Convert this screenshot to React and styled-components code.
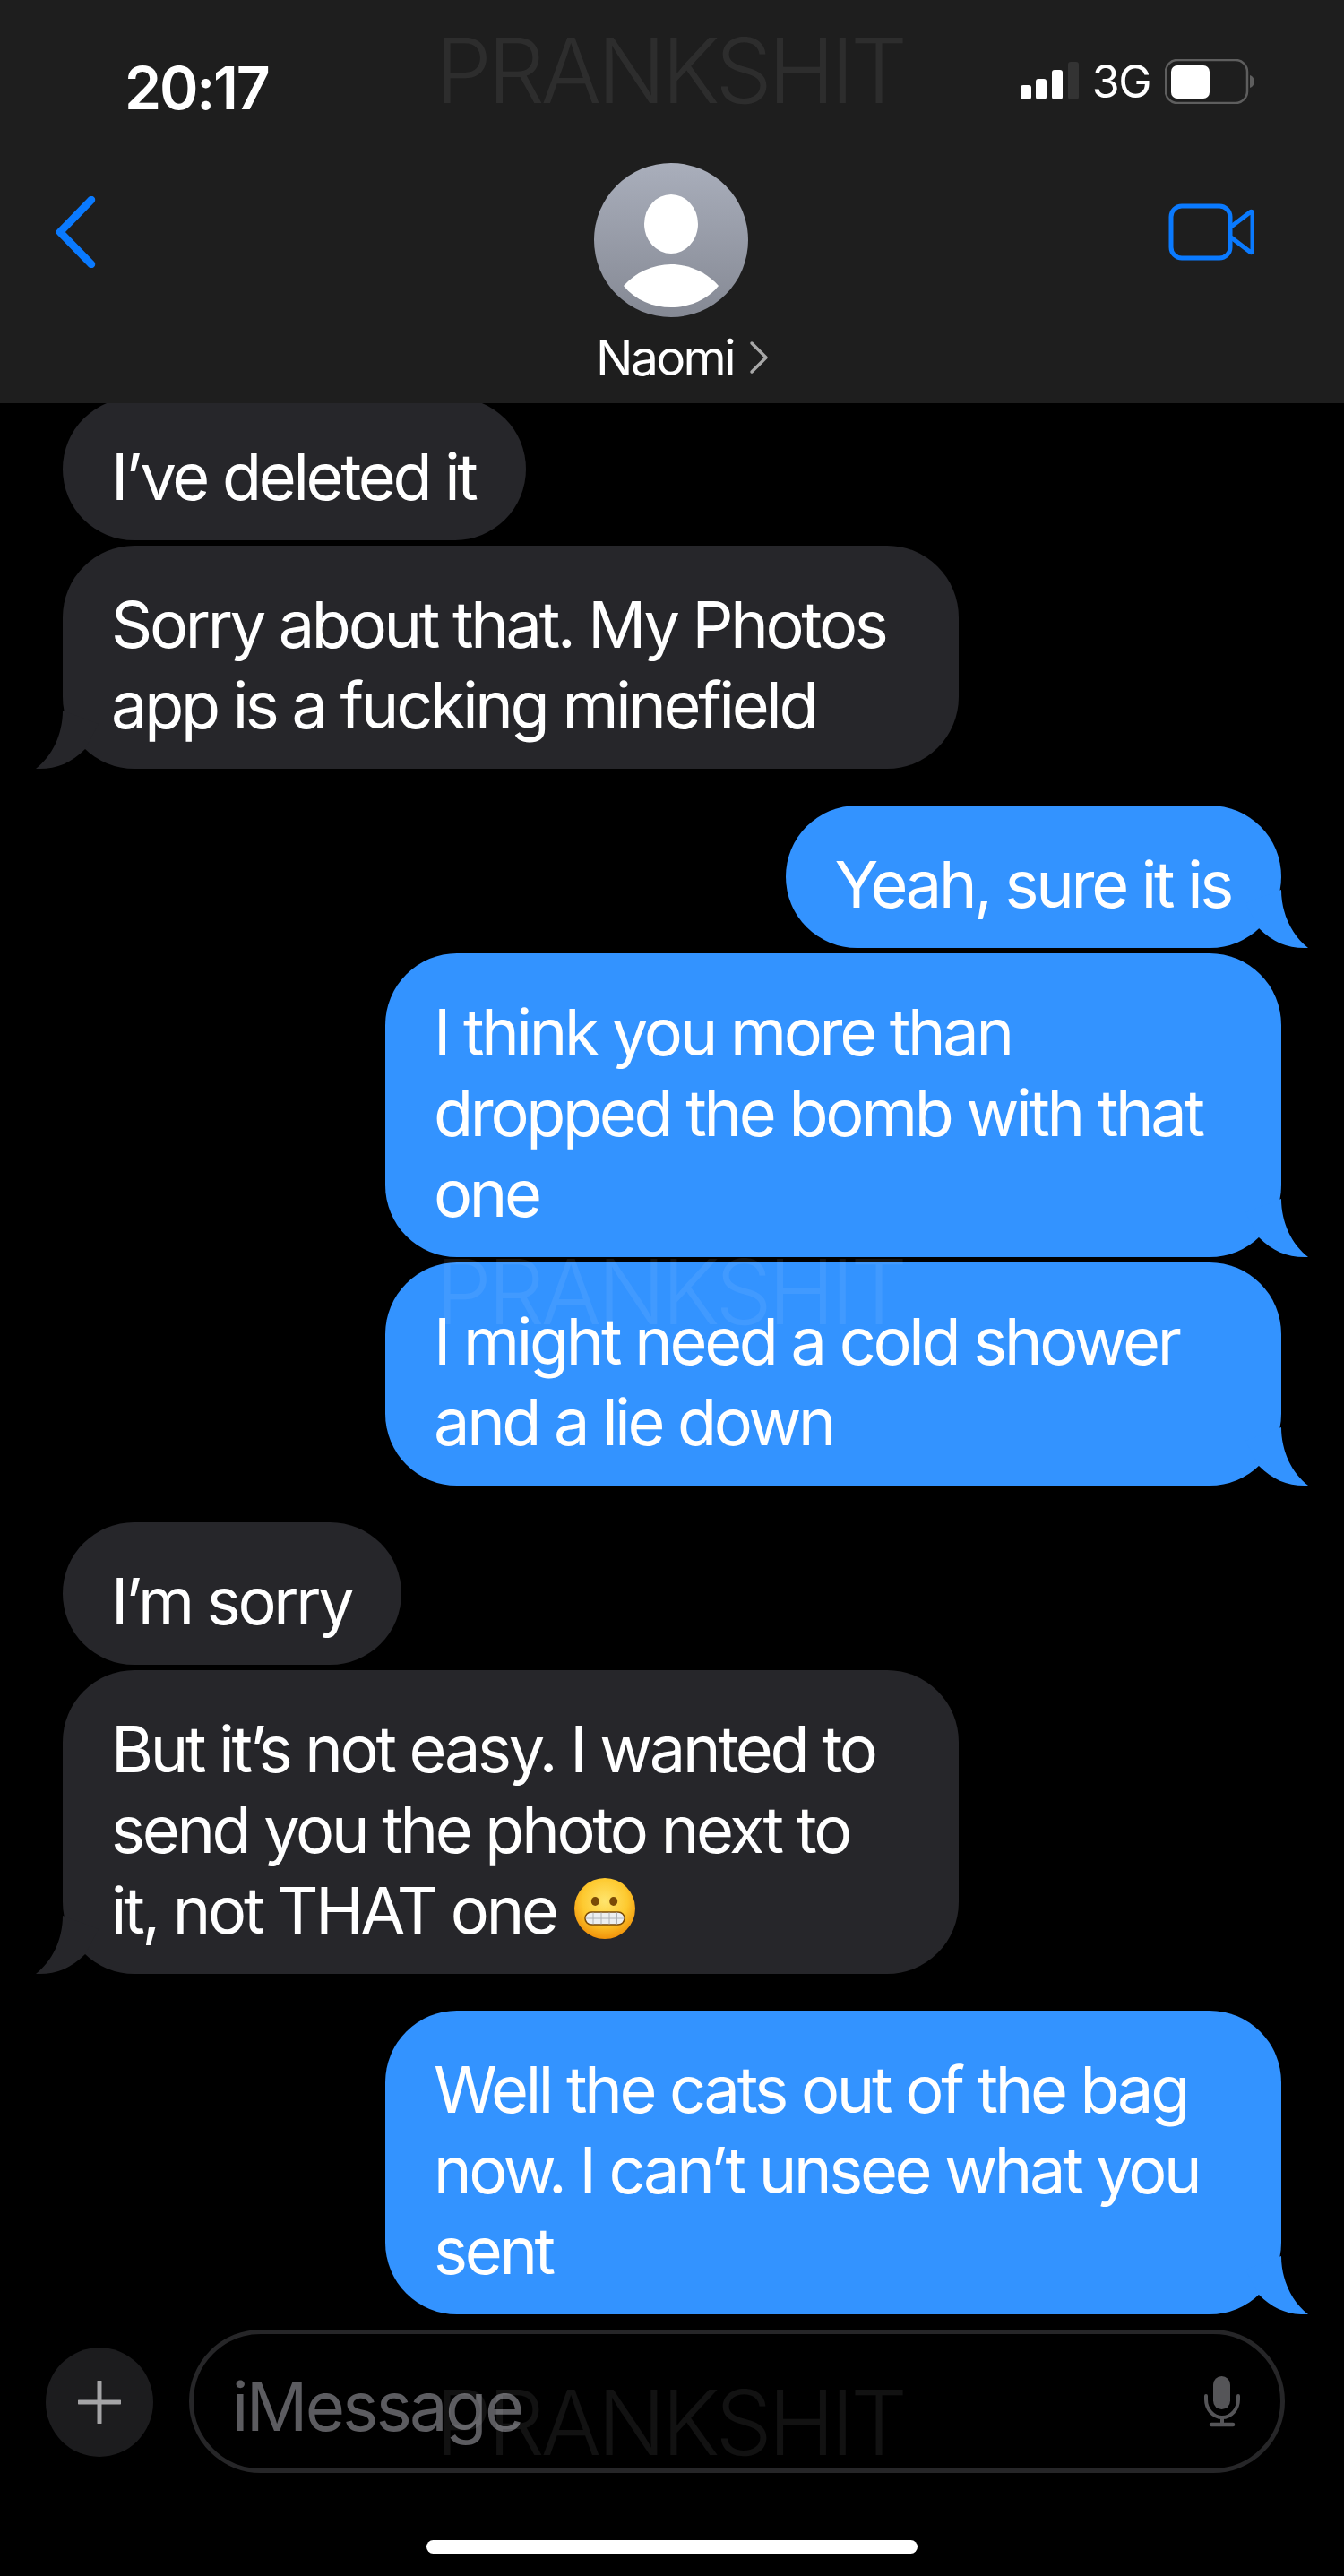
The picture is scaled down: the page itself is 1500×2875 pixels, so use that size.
import React from 'react';
import styled, { createGlobalStyle } from 'styled-components';

const Global = createGlobalStyle`
  html, body { margin: 0; padding: 0; background: #000; }
  body { font-family: Inter, "Liberation Sans", sans-serif; }
`;

const Phone = styled.div`
  position: relative;
  width: 1500px;
  height: 2875px;
  background: #000;
  overflow: hidden;
  display: flex;
  flex-direction: column;
`;

const Header = styled.header`
  position: relative;
  z-index: 1;
  height: 450px;
  flex: none;
  background: #1e1e1e;
  box-sizing: border-box;
`;

const StatusBar = styled.div`
  height: 182px;
  display: flex;
  align-items: flex-start;
  box-sizing: border-box;
  padding: 58px 100px 0 139px;
`;

const Time = styled.div`
  color: #fff;
  font-size: 66px;
  line-height: 80px;
  font-weight: 600;
  letter-spacing: -2.2px;
`;

const StatusRight = styled.div`
  margin-left: auto;
  display: flex;
  align-items: flex-start;
`;

const Signal = styled.svg`
  width: 66px;
  height: 44px;
  margin-top: 11px;
`;

const Network = styled.span`
  color: #fff;
  font-size: 50px;
  line-height: 58px;
  margin-left: 14px;
  margin-top: 4px;
  letter-spacing: -1.500px;
`;

const Battery = styled.svg`
  width: 100px;
  height: 50px;
  margin-left: 16px;
  margin-top: 8px;
`;

const Nav = styled.div`
  display: grid;
  grid-template-columns: 1fr auto 1fr;
  align-items: start;
  padding: 0 100px 0 61px;
`;

const BackIcon = styled.svg`
  width: 48px;
  height: 80px;
  margin-top: 37px;
`;

const Contact = styled.div`
  display: flex;
  flex-direction: column;
  align-items: center;
  margin-left: 37px;
`;

const Avatar = styled.svg`
  width: 172px;
  height: 172px;
  display: block;
`;

const Name = styled.div`
  display: flex;
  align-items: center;
  color: #fff;
  font-size: 55px;
  line-height: 60px;
  font-weight: 400;
  letter-spacing: -2.600px;
  margin-top: 15px;
  margin-left: 25px;
`;

const NameChevron = styled.svg`
  width: 22px;
  height: 38px;
  margin-left: 17px;
`;

const VideoIcon = styled.svg`
  justify-self: end;
  width: 96px;
  height: 64px;
  margin-top: 45px;
`;

const Messages = styled.main`
  flex: none;
  height: 2133px;
  overflow: hidden;
  display: flex;
  flex-direction: column;
  padding: 0 70px;
`;

const Bubble = styled.div`
  position: relative;
  align-self: ${p => (p.$me ? 'flex-end' : 'flex-start')};
  max-width: 1000px;
  box-sizing: border-box;
  padding: 43px 56px 26px 54px;
  margin-top: ${p => p.$gap}px;
  border-radius: 80px;
  background: ${p => (p.$me ? '#3393ff' : '#26262a')};
  color: #fff;
  font-size: 72px;
  line-height: 90px;
  letter-spacing: -3.300px;

  &::after {
    content: ${p => (p.$tail ? "''" : 'none')};
    position: absolute;
    bottom: 0;
    ${p => (p.$me ? 'right: -30px;' : 'left: -30px;')}
    width: 110px;
    height: 80px;
    background: inherit;
    transform: ${p => (p.$me ? 'none' : 'scaleX(-1)')};
    clip-path: path('M80 15 C80 42 92 66 110 80 C88 81 71 74 55 58 L40 30 Z');
  }
`;

const Emoji = styled.svg`
  width: 68px;
  height: 68px;
  vertical-align: -6px;
  margin-left: 3px;
`;

const Composer = styled.div`
  flex: none;
  display: flex;
  align-items: center;
  gap: 40px;
  padding: 17px 66px 0 51px;
`;

const PlusButton = styled.div`
  width: 120px;
  height: 122px;
  flex: none;
  border-radius: 50%;
  background: #1c1c1e;
  display: flex;
  align-items: center;
  justify-content: center;
  margin-top: 1px;
`;

const PlusIcon = styled.svg`
  width: 48px;
  height: 48px;
`;

const InputBox = styled.div`
  flex: 1;
  height: 160px;
  box-sizing: border-box;
  border: 5px solid #262628;
  border-radius: 80px;
  display: flex;
  align-items: center;
  justify-content: space-between;
  padding: 0 44px 0 43px;
`;

const Placeholder = styled.span`
  color: #5c5c60;
  font-size: 76px;
  line-height: 80px;
  letter-spacing: -2.700px;
  margin-top: 10px;
`;

const MicIcon = styled.svg`
  width: 42px;
  height: 60px;
`;

const HomeBar = styled.div`
  width: 548px;
  height: 15px;
  border-radius: 8px;
  background: #fff;
  margin: 75px auto 0;
  flex: none;
`;

const Watermark = styled.div`
  position: absolute;
  z-index: 2;
  left: 486px;
  top: ${p => p.$top}px;
  color: rgba(255, 255, 255, 0.07);
  font-size: 100px;
  font-weight: 300;
  line-height: 100px;
  letter-spacing: -4.200px;
  pointer-events: none;
  white-space: nowrap;
`;

const messages = [
  { id: 1, gap: -6, text: 'I’ve deleted it' },
  { id: 2, gap: 6, tail: true, text: 'Sorry about that. My Photos app is a fucking minefield' },
  { id: 3, gap: 41, me: true, tail: true, text: 'Yeah, sure it is' },
  { id: 4, gap: 6, me: true, tail: true, text: 'I think you more than dropped the bomb with that one' },
  { id: 5, gap: 6, me: true, tail: true, text: 'I might need a cold shower and a lie down' },
  { id: 6, gap: 41, text: 'I’m sorry' },
  { id: 7, gap: 6, tail: true, emoji: true, text: 'But it’s not easy. I wanted to send you the photo next to it,\u00a0not THAT one' },
  { id: 8, gap: 41, me: true, tail: true, text: 'Well the cats out of the bag now. I can’t unsee what you sent' },
];

const GrimaceEmoji = () => (
  <Emoji viewBox="0 0 68 68" aria-hidden="true">
    <defs>
      <radialGradient id="face" cx="50%" cy="38%" r="62%">
        <stop offset="0" stopColor="#ffe56e" />
        <stop offset="0.6" stopColor="#fdc92f" />
        <stop offset="1" stopColor="#f0920a" />
      </radialGradient>
    </defs>
    <circle cx="34" cy="34" r="34" fill="url(#face)" />
    <ellipse cx="23.300" cy="26" rx="4.500" ry="5" fill="#7a4a06" />
    <ellipse cx="43.700" cy="26" rx="4.500" ry="5" fill="#7a4a06" />
    <rect x="12" y="38" width="44" height="14" rx="7" fill="#eceff1" stroke="#7a4a06" strokeWidth="1.600" />
    <path d="M12.500 45H55.500M21 38.500V51.500M30 38.500V51.500M39 38.500V51.500M47.500 38.500V51.500" stroke="#aeb2b6" strokeWidth="1" fill="none" />
  </Emoji>
);

export default function App() {
  return (
    <Phone>
      <Global />
      <Header>
        <StatusBar>
          <Time>20:17</Time>
          <StatusRight>
            <Signal viewBox="0 0 66 44">
              <rect x="0" y="26" width="12" height="16" rx="3" fill="#fff" />
              <rect x="17" y="19" width="12" height="23" rx="3" fill="#fff" />
              <rect x="35" y="9" width="12" height="33" rx="3" fill="#fff" />
              <rect x="53" y="0" width="12" height="42" rx="3" fill="#333" />
            </Signal>
            <Network>3G</Network>
            <Battery viewBox="0 0 100 50">
              <rect x="1" y="1" width="91" height="48" rx="13" fill="none" stroke="#5e5e5e" strokeWidth="2.500" />
              <rect x="7" y="7" width="43" height="37" rx="7" fill="#fff" />
              <path d="M95 18C98 19 100 22 100 25C100 28 98 31 95 32Z" fill="#5e5e5e" />
            </Battery>
          </StatusRight>
        </StatusBar>
        <Nav>
          <BackIcon viewBox="0 0 48 80">
            <path d="M41 4L6 40L41 76" fill="none" stroke="#0a7aff" strokeWidth="8.500" strokeLinecap="round" strokeLinejoin="round" />
          </BackIcon>
          <Contact>
            <Avatar viewBox="0 0 172 172">
              <defs>
                <linearGradient id="avatarBg" x1="0" y1="0" x2="0" y2="1">
                  <stop offset="0" stopColor="#a9aebb" />
                  <stop offset="1" stopColor="#858994" />
                </linearGradient>
              </defs>
              <circle cx="86" cy="86" r="86" fill="url(#avatarBg)" />
              <ellipse cx="86" cy="68" rx="30" ry="33" fill="#fff" />
              <path d="M33 137C46 122 66 113 86 113C106 113 126 122 139 137C126 153 106 161 86 161C66 161 46 153 33 137Z" fill="#fff" />
            </Avatar>
            <Name>
              Naomi
              <NameChevron viewBox="0 0 22 38">
                <path d="M3 3L19 19L3 35" fill="none" stroke="#a8a8a8" strokeWidth="3.500" strokeLinecap="round" strokeLinejoin="round" />
              </NameChevron>
            </Name>
          </Contact>
          <VideoIcon viewBox="0 0 96 64">
            <rect x="3" y="3" width="66" height="58" rx="12" fill="none" stroke="#0a7aff" strokeWidth="5" />
            <path d="M70 26L91 10C93 8.500 94 9.500 94 11V53C94 54.500 93 55.500 91 54L70 38" fill="none" stroke="#0a7aff" strokeWidth="5" strokeLinejoin="round" />
          </VideoIcon>
        </Nav>
      </Header>
      <Messages>
        {messages.map(m => (
          <Bubble key={m.id} $me={m.me} $tail={m.tail} $gap={m.gap}>
            {m.text}
            {m.emoji && <> <GrimaceEmoji /></>}
          </Bubble>
        ))}
      </Messages>
      <Composer>
        <PlusButton>
          <PlusIcon viewBox="0 0 48 48">
            <path d="M24 1V47M1 24H47" stroke="#a4a4a6" strokeWidth="5" strokeLinecap="round" />
          </PlusIcon>
        </PlusButton>
        <InputBox>
          <Placeholder>iMessage</Placeholder>
          <MicIcon viewBox="0 0 42 60">
            <rect x="11" y="2" width="19" height="37" rx="9.500" fill="#555558" />
            <path d="M3 24V28C3 39 11 48 21 48C31 48 39 39 39 28V24" fill="none" stroke="#555558" strokeWidth="4" strokeLinecap="round" />
            <path d="M21 48V56" stroke="#555558" strokeWidth="4" />
            <path d="M9 56H33" stroke="#555558" strokeWidth="4.500" strokeLinecap="round" />
          </MicIcon>
        </InputBox>
      </Composer>
      <HomeBar />
      <Watermark $top={29}>PRANKSHIT</Watermark>
      <Watermark $top={1392}>PRANKSHIT</Watermark>
      <Watermark $top={2654}>PRANKSHIT</Watermark>
    </Phone>
  );
}
